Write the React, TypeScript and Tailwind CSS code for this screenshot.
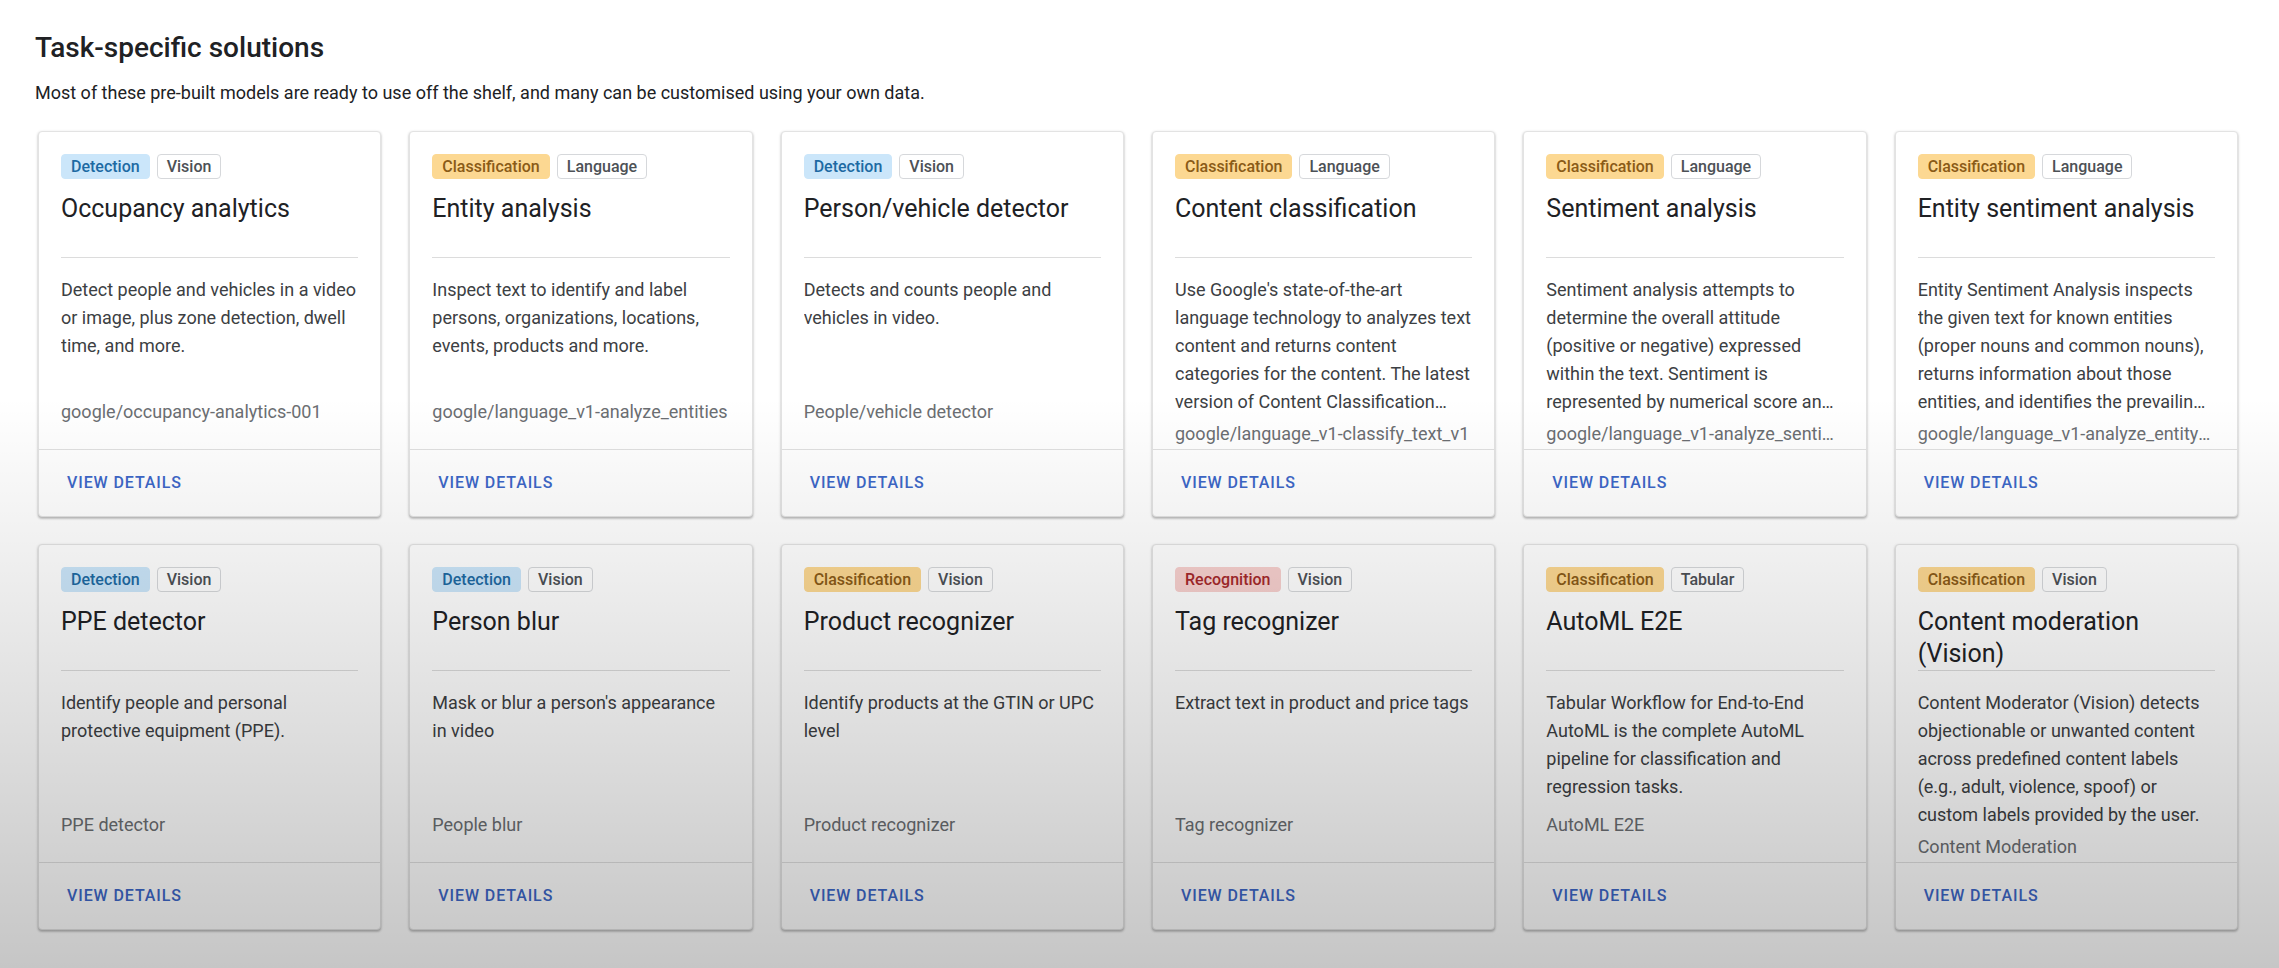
const chipStyles: Record<string, string> = {
  Detection: 'bg-[#cbe6fa] text-[#1d6aa3] border-[#cbe6fa]',
  Classification: 'bg-[#fcd892] text-[#8a5b17] border-[#fcd892]',
  Recognition: 'bg-[#f7d0ce] text-[#a5282b] border-[#f7d0ce]',
  outline: 'bg-white text-[#4d5156] border-[#d6d8db]'
};

const models = [
  {
    kind: 'Detection',
    domain: 'Vision',
    title: 'Occupancy analytics',
    description: 'Detect people and vehicles in a video or image, plus zone detection, dwell time, and more.',
    id: 'google/occupancy-analytics-001'
  },
  {
    kind: 'Classification',
    domain: 'Language',
    title: 'Entity analysis',
    description: 'Inspect text to identify and label persons, organizations, locations, events, products and more.',
    id: 'google/language_v1-analyze_entities'
  },
  {
    kind: 'Detection',
    domain: 'Vision',
    title: 'Person/vehicle detector',
    description: 'Detects and counts people and vehicles in video.',
    id: 'People/vehicle detector'
  },
  {
    kind: 'Classification',
    domain: 'Language',
    title: 'Content classification',
    description:
      "Use Google's state-of-the-art language technology to analyzes text content and returns content categories for the content. The latest version of Content Classification supports a much larger set of categories.",
    id: 'google/language_v1-classify_text_v1'
  },
  {
    kind: 'Classification',
    domain: 'Language',
    title: 'Sentiment analysis',
    description:
      'Sentiment analysis attempts to determine the overall attitude (positive or negative) expressed within the text. Sentiment is represented by numerical score and magnitude values.',
    id: 'google/language_v1-analyze_sentiment'
  },
  {
    kind: 'Classification',
    domain: 'Language',
    title: 'Entity sentiment analysis',
    description:
      'Entity Sentiment Analysis inspects the given text for known entities (proper nouns and common nouns), returns information about those entities, and identifies the prevailing emotional opinion of the entity within the text.',
    id: 'google/language_v1-analyze_entity_sentiment'
  },
  {
    kind: 'Detection',
    domain: 'Vision',
    title: 'PPE detector',
    description: 'Identify people and personal protective equipment (PPE).',
    id: 'PPE detector'
  },
  {
    kind: 'Detection',
    domain: 'Vision',
    title: 'Person blur',
    description: "Mask or blur a person's appearance in video",
    id: 'People blur'
  },
  {
    kind: 'Classification',
    domain: 'Vision',
    title: 'Product recognizer',
    description: 'Identify products at the GTIN or UPC level',
    id: 'Product recognizer'
  },
  {
    kind: 'Recognition',
    domain: 'Vision',
    title: 'Tag recognizer',
    description: 'Extract text in product and price tags',
    id: 'Tag recognizer'
  },
  {
    kind: 'Classification',
    domain: 'Tabular',
    title: 'AutoML E2E',
    description:
      'Tabular Workflow for End-to-End AutoML is the complete AutoML pipeline for classification and regression tasks.',
    id: 'AutoML E2E'
  },
  {
    kind: 'Classification',
    domain: 'Vision',
    title: 'Content moderation (Vision)',
    description:
      'Content Moderator (Vision) detects objectionable or unwanted content across predefined content labels (e.g., adult, violence, spoof) or custom labels provided by the user.',
    id: 'Content Moderation'
  }
];

function Chip({ label, variant }: { label: string; variant: string }) {
  return (
    <span
      className={`flex h-[25px] items-center rounded-[4px] border px-[9px] text-[16px] font-medium ${chipStyles[variant]}`}
    >
      {label}
    </span>
  );
}

function ModelCard({ model }: { model: (typeof models)[number] }) {
  return (
    <article className="flex flex-col overflow-hidden rounded-[4px] border border-[#e3e3e3] bg-white shadow-[0_1px_3px_rgba(0,0,0,0.22),0_2px_2px_rgba(0,0,0,0.12)]">
      <div className="flex h-[317px] flex-col overflow-hidden px-[22px] pt-[22px]">
        <div className="flex gap-[7px]">
          <Chip label={model.kind} variant={model.kind} />
          <Chip label={model.domain} variant="outline" />
        </div>
        <h3 className="mt-[14px] line-clamp-2 h-[64px] text-[25px] leading-[32px] text-[#202124]">{model.title}</h3>
        <div className="border-t border-[#dcdcdc]" />
        <p className="mt-[18px] line-clamp-5 min-h-[118px] text-[18px] leading-[28px] text-[#3c4043]">
          {model.description}
        </p>
        <p className="mt-[6px] truncate text-[18px] leading-[24px] text-[#6b6e72]">{model.id}</p>
      </div>
      <div className="flex h-[67px] items-center border-t border-[#e0e0e0] px-[22px]">
        <button className="px-[6px] text-[16px] font-medium tracking-[0.9px] text-[#3d67c8]">VIEW DETAILS</button>
      </div>
    </article>
  );
}

export default function App() {
  return (
    <div className="relative h-[968px] w-[2279px] overflow-hidden bg-white font-['Roboto','Liberation_Sans',sans-serif]">
      <div className="pt-[32px]">
        <div className="pl-[35px]">
          <h2 className="text-[28px] font-medium leading-[32px] text-[#202124]">Task-specific solutions</h2>
          <p className="mt-[17px] text-[18px] leading-[24px] text-[#202124]">
            Most of these pre-built models are ready to use off the shelf, and many can be customised using your own data.
          </p>
        </div>
        <div className="mt-[26px] grid grid-cols-6 gap-x-[28px] gap-y-[27px] pl-[38px] pr-[41px]">
          {models.map((model) => (
            <ModelCard key={model.title} model={model} />
          ))}
        </div>
      </div>
      <div className="pointer-events-none absolute inset-0 bg-[linear-gradient(to_bottom,transparent_41%,rgba(0,0,0,0.225)_100%)]" />
    </div>
  );
}
